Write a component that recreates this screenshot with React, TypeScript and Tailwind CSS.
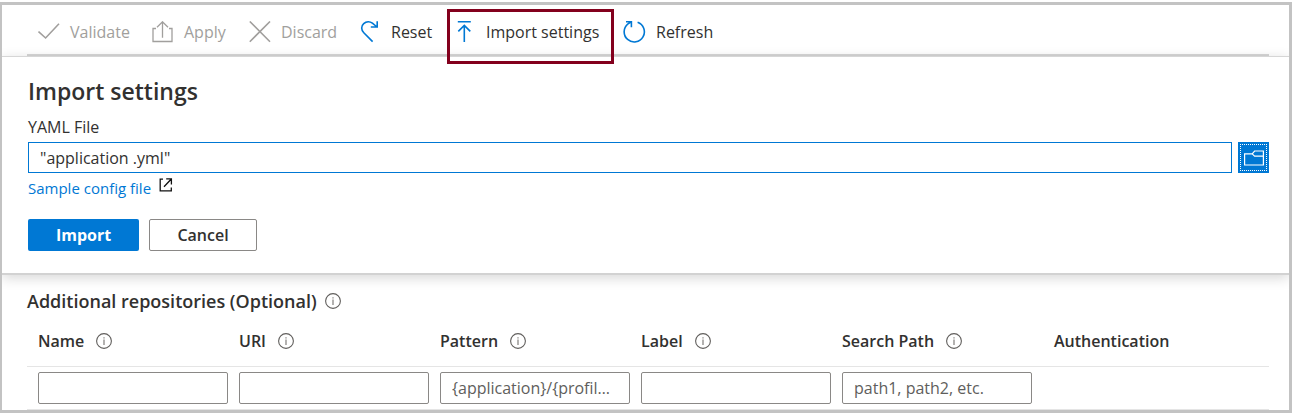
import type { ReactNode } from "react";

const stroke = { fill: "none", stroke: "currentColor", strokeWidth: 1.3 };

function CheckIcon() {
  return (
    <svg width="22" height="22" viewBox="0 0 22 22" {...stroke} strokeWidth={1.6} aria-hidden="true">
      <path d="M.5 10.5 7.6 17 21 2.8" />
    </svg>
  );
}

function ApplyIcon() {
  return (
    <svg width="22" height="22" viewBox="0 0 22 22" {...stroke} aria-hidden="true">
      <path d="M4 7.5H1v13h19v-13h-3M10.5 16.8V.8M5 6.2 10.5.8 16 6.2" />
    </svg>
  );
}

function DiscardIcon() {
  return (
    <svg width="22" height="22" viewBox="0 0 22 22" {...stroke} strokeWidth={1.6} aria-hidden="true">
      <path d="M.8.5 21 20.7M21 .5.8 20.7" />
    </svg>
  );
}

function ResetIcon() {
  return (
    <svg width="22" height="22" viewBox="0 0 22 22" {...stroke} strokeWidth={1.6} aria-hidden="true">
      <path d="M13.6 20.6 4.8 11.8C2 9 2 5 4.7 2.6 7.3.3 11 .4 13.4 2.2L18 6M18.2.3V6h-6.4" />
    </svg>
  );
}

function ImportIcon() {
  return (
    <svg width="22" height="22" viewBox="0 0 22 22" {...stroke} strokeWidth={1.6} aria-hidden="true">
      <path d="M3.8.8h13M10.3 21V4.8M4.3 10.4l6-6 6 6" />
    </svg>
  );
}

function RefreshIcon() {
  return (
    <svg width="23" height="22" viewBox="0 0 23 22" {...stroke} strokeWidth={1.6} aria-hidden="true">
      <path d="M14.6 1.3A10.1 10.1 0 1 1 5 2.9L8.2.8M3 .8h5.4v5.4" />
    </svg>
  );
}

function InfoIcon() {
  return (
    <svg width="16" height="16" viewBox="0 0 16 16" className="shrink-0 text-[#605e5c]" aria-hidden="true">
      <circle cx="8" cy="8" r="7.4" fill="none" stroke="currentColor" strokeWidth="1.1" />
      <path d="M8 6.6V12M8 4.2v1.3" stroke="#8a8886" strokeWidth="1.3" />
    </svg>
  );
}

function ExternalIcon() {
  return (
    <svg width="14" height="14" viewBox="0 0 14 14" fill="none" stroke="#111" strokeWidth="1.3" aria-hidden="true">
      <path d="M4 1.2H1.2v11.6h11.1V9.5M7.2.9h5.2v5.6M12.3 1 5 8.8" />
    </svg>
  );
}

function FolderIcon() {
  return (
    <svg width="20" height="16" viewBox="0 0 20 16" className="shrink-0" fill="none" stroke="#fff" strokeWidth="1.2" aria-hidden="true">
      <path d="M.6 3.8h7.6L10.6 1h8.8v14H.6zM8.2 3.8l2.4 2.4h8.8" />
    </svg>
  );
}

function ToolButton({ icon, label, width, disabled = false, highlighted = false }: {
  icon: ReactNode; label: string; width: string; disabled?: boolean; highlighted?: boolean;
}) {
  return (
    <button
      type="button"
      disabled={disabled}
      className={`relative flex shrink-0 items-center gap-2.5 pt-1 whitespace-nowrap text-[#323130] disabled:text-[#a19f9d] ${width}`}
    >
      <span className={disabled ? "text-[#a19f9d]" : "text-[#0078d4]"}>{icon}</span>
      {label}
      {highlighted && (
        <span className="pointer-events-none absolute top-1 -left-[7px] z-10 h-[55px] w-[167px] border-3 border-[#83001d]" />
      )}
    </button>
  );
}

const columns = [
  { label: "Name", placeholder: "" },
  { label: "URI", placeholder: "" },
  { label: "Pattern", placeholder: "{application}/{profiles}" },
  { label: "Label", placeholder: "" },
  { label: "Search Path", placeholder: "path1, path2, etc." },
];

export default function App() {
  return (
    <div className="bg-white pt-[2px] pb-px font-['Open_Sans','Noto_Sans',sans-serif] text-[16px] text-[#323130]">
      <div className="overflow-hidden border-3 border-l-2 border-[#c3c3c3]">
        <div className="pr-5 pl-[25px]">
          <nav aria-label="Commands" className="flex h-[51px] border-b-2 border-[#d6d6d6] pl-[11px]">
            <ToolButton icon={<CheckIcon />} label="Validate" width="w-[114px]" disabled />
            <ToolButton icon={<ApplyIcon />} label="Apply" width="w-[97px]" disabled />
            <ToolButton icon={<DiscardIcon />} label="Discard" width="w-[110px]" disabled />
            <ToolButton icon={<ResetIcon />} label="Reset" width="w-[95px]" />
            <ToolButton icon={<ImportIcon />} label="Import settings" width="w-[169px]" highlighted />
            <ToolButton icon={<RefreshIcon />} label="Refresh" width="w-[100px]" />
          </nav>
        </div>

        <section className="border-t border-b-2 border-t-[#d6d6d6] border-b-[#d2d2d2] pt-[18px] pr-5 pb-[22px] pl-[26px] shadow-[0_3px_12px_rgba(0,0,0,0.16)]">
          <h1 className="text-[23px] leading-8 font-semibold">Import settings</h1>
          <label htmlFor="yaml" className="block pt-2 pb-[3px] leading-6">YAML File</label>
          <div className="flex gap-1.5">
            <input
              id="yaml"
              type="text"
              defaultValue={'"application .yml"'}
              className="h-[31px] min-w-0 flex-1 border border-[#0078d4] px-[11px] outline-none"
            />
            <button
              type="button"
              aria-label="Browse for a file"
              className="flex h-[31px] w-[31px] items-center justify-center bg-[#0078d4] p-0.5"
            >
              <span className="flex h-full w-full items-center justify-center border border-dotted border-white">
                <FolderIcon />
              </span>
            </button>
          </div>
          <a href="#sample" className="flex items-center gap-2 pt-[3px] text-[15px] leading-6 text-[#0078d4]">
            Sample config file
            <span className="pb-1.5"><ExternalIcon /></span>
          </a>
          <div className="flex gap-2.5 pt-[19px]">
            <button type="button" className="h-8 w-[111px] rounded-xs bg-[#0078d4] font-bold text-white">Import</button>
            <button type="button" className="h-8 w-[108px] rounded-xs border border-[#8a8886] font-semibold">Cancel</button>
          </div>
        </section>

        <section className="pt-[14px] pr-5 pl-[25px]">
          <h2 className="flex items-center gap-2 text-[18px] leading-6 font-semibold">
            Additional repositories (Optional)
            <InfoIcon />
          </h2>
          <table className="w-full table-fixed border-collapse">
            <thead>
              <tr className="border-b border-[#e5e5e5]">
                {columns.map((c) => (
                  <th key={c.label} scope="col" className="h-[53px] w-[201px] pt-2 pb-1 pl-[11px] text-left font-semibold">
                    <span className="flex items-center gap-3 whitespace-nowrap">
                      {c.label}
                      <InfoIcon />
                    </span>
                  </th>
                ))}
                <th scope="col" className="pt-2 pb-1 pl-[22px] text-left font-semibold">Authentication</th>
              </tr>
            </thead>
            <tbody>
              <tr className="border-b border-[#e5e5e5]">
                {columns.map((c) => (
                  <td key={c.label} className="pt-[5px] pb-[5px] pl-[11px]">
                    <input
                      type="text"
                      aria-label={c.label}
                      placeholder={c.placeholder}
                      className="block h-8 w-full rounded-xs border border-[#8a8886] px-[11px] text-ellipsis outline-none placeholder:text-[#605e5c]"
                    />
                  </td>
                ))}
                <td />
              </tr>
            </tbody>
          </table>
        </section>
      </div>
    </div>
  );
}
